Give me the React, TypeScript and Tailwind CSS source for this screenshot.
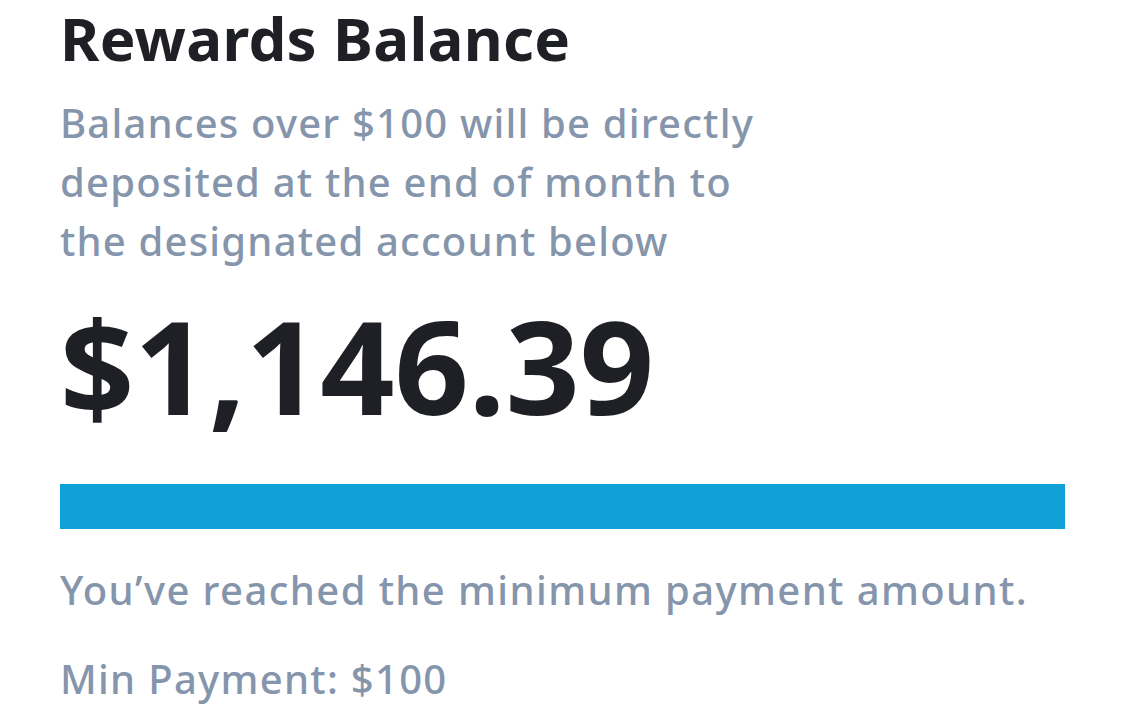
import React from "react";

export default function App() {
  return (
    <div className="w-[1125px] h-[718px] bg-white overflow-hidden" style={{ fontFamily: '"Noto Sans", "Open Sans", sans-serif' }}>
      <div className="flex flex-col pl-[60px] pr-[60px]">
        <h1 className="text-[60px] leading-[76px] font-bold text-[#1e2026] tracking-[0.3px]">Rewards Balance</h1>
        <p className="mt-[17px] text-[40px] leading-[59px] font-medium text-[#8595ac] tracking-[1.2px]">
          Balances over $100 will be directly
          <br />
          deposited at the end of month to
          <br />
          the designated account below
        </p>
        <div className="mt-[25px] text-[130px] leading-[140px] font-bold text-[#1e2026]">$1,146.39</div>
        <div className="mt-[49px] h-[45px] w-[1005px] bg-[#0ea0d7]" />
        <p className="mt-[36px] text-[40px] leading-[50px] font-medium text-[#8595ac] tracking-[1.4px]">You’ve reached the minimum payment amount.</p>
        <p className="mt-[39px] text-[40px] leading-[50px] font-medium text-[#8595ac] tracking-[1.3px]">Min Payment: $100</p>
      </div>
    </div>
  );
}
